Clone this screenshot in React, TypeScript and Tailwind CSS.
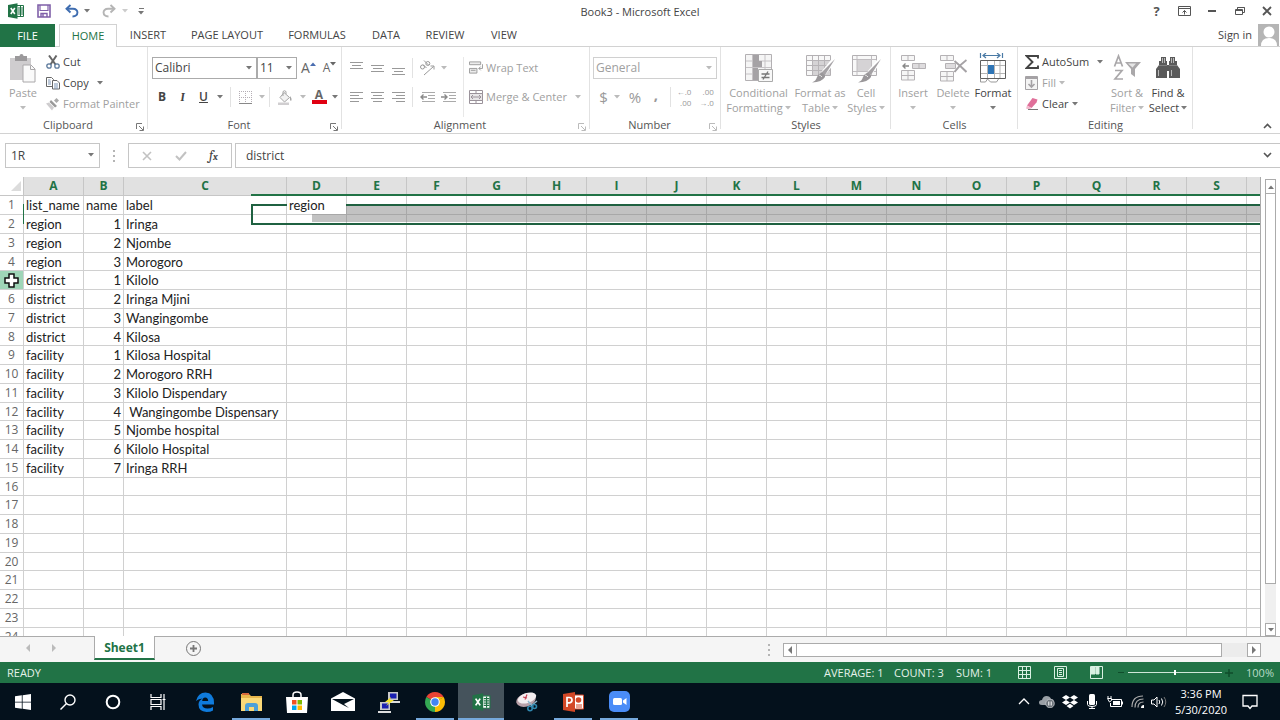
import React from 'react';

type SvgProps = { className?: string };

const Caret: React.FC<SvgProps> = ({ className = 'text-[#777]' }) => (
  <svg viewBox="0 0 6 4" className={`w-[6px] h-[4px] shrink-0 ${className}`}>
    <path d="M0 0h6L3 3.5z" fill="currentColor" />
  </svg>
);

/* ---------- title bar icons ---------- */

const ExcelIcon: React.FC<SvgProps> = ({ className = 'w-4 h-4' }) => (
  <svg viewBox="0 0 16 16" className={className}>
    <path d="M9 2.5h6.5v11H9" fill="#fff" stroke="#217346" />
    <path d="M10 5h5M10 7h5M10 9h5M10 11h5M12.5 3v10" stroke="#217346" />
    <path d="M0 2l9.5-1.8v15.6L0 14z" fill="#217346" />
    <path d="M2.8 5l4 6M6.8 5l-4 6" stroke="#fff" strokeWidth="1.6" />
  </svg>
);

const SaveIcon = () => (
  <svg viewBox="0 0 14 14" className="w-[14px] h-[14px]" fill="none" stroke="#7f5fa8" strokeWidth="1.6">
    <path d="M1 1h12v12H1z" />
    <path d="M3 1v5.5h8V1" strokeWidth="1.2" />
    <path d="M4 13V9.5h6V13M6 10v3" strokeWidth="1.4" />
  </svg>
);

const UndoIcon: React.FC<SvgProps> = ({ className = '' }) => (
  <svg viewBox="0 0 14 14" className={`w-[14px] h-[14px] ${className}`} fill="none" stroke="currentColor" strokeWidth="1.9">
    <path d="M5.5 1L1.5 4.8l4 3.7" />
    <path d="M2 4.8h6c6 0 6 7.5-.5 7.7" />
  </svg>
);

/* ---------- ribbon icons ---------- */

const PasteIcon = () => (
  <svg viewBox="0 0 28 31" className="w-7 h-[31px]">
    <path d="M1 5h21v22H1z" fill="#cfcdcf" />
    <path d="M6 3h4.500a2 2 0 0 1 4 0H18v5H6z" fill="#9b999b" />
    <path d="M14 12h8l4 4v13H14z" fill="#fafafa" stroke="#aaa8aa" />
    <path d="M21.500 12.500v4H26" fill="none" stroke="#aaa8aa" />
  </svg>
);

const CutIcon = () => (
  <svg viewBox="0 0 14 14" className="w-[14px] h-[14px]" fill="none">
    <path d="M3 .5l6.500 9M10.500 .5L4.500 9.500" stroke="#666" strokeWidth="2" />
    <circle cx="3" cy="11" r="2.200" stroke="#5c7a9c" strokeWidth="1.300" />
    <circle cx="11" cy="11" r="2.200" stroke="#5c7a9c" strokeWidth="1.300" />
  </svg>
);

const CopyIcon = () => (
  <svg viewBox="0 0 14 14" className="w-[14px] h-[14px]" fill="#fff" stroke="#666">
    <path d="M.5 1.500h5l2 2v7h-7z" />
    <path d="M6.500 4.500h4.500l2.500 2.500v6h-7z" />
    <path d="M2 4h2.500M2 6h3M2 8h3M8 8h4M8 10h4M8 12h4" stroke="#7b93b3" />
  </svg>
);

const PainterIcon = () => (
  <svg viewBox="0 0 14 14" className="w-[14px] h-[14px]">
    <path d="M10.500 1L13 3.500 10.500 6 8 3.500z" fill="#aaa" />
    <path d="M5 3l6 6-2 1.500-5.500-5.500z" fill="#999" />
    <path d="M0 6.500l3-1 5 5-2 3z" fill="#cfcdcf" />
  </svg>
);

const BordersIcon = () => (
  <svg viewBox="0 0 13 13" className="w-[13px] h-[13px]" fill="none" stroke="#b5aeb5">
    <path d="M.5 0v12M12.500 0v12M6.500 0v12M0 .5h13M0 6.500h13" strokeDasharray="1 1" />
    <path d="M0 12.500h13" stroke="#888" />
  </svg>
);

const BucketIcon = () => (
  <svg viewBox="0 0 15 15" className="w-[15px] h-[15px]" fill="none">
    <path d="M6 2.500l5.500 5-5 4.500L2 7.500z" fill="#f2f2f2" stroke="#a5a5a5" />
    <path d="M5 6V1.500q1.500-1.500 3 0V4" stroke="#a5a5a5" />
    <path d="M12 6q2.500 3 1 5-1.500-.5-1-5z" fill="#a5a5a5" />
    <path d="M0 12.500h11v2.500H0z" fill="#d0ced0" />
  </svg>
);

const ALIGN_LINES: Record<string, string> = {
  top: 'M0 .5h13M2 3.500h9M0 6.500h13',
  middle: 'M0 3.500h13M2 6.500h9M0 9.500h13',
  bottom: 'M0 6.500h13M2 9.500h9M0 12.500h13',
  left: 'M0 1.500h13M0 4.500h9M0 7.500h13M0 10.500h9',
  center: 'M0 1.500h13M2 4.500h9M0 7.500h13M2 10.500h9',
  right: 'M0 1.500h13M4 4.500h9M0 7.500h13M4 10.500h9',
};

const AlignIcon: React.FC<{ kind: string }> = ({ kind }) => (
  <svg viewBox="0 0 13 13" className="w-[13px] h-[13px]" stroke="#999">
    <path d={ALIGN_LINES[kind]} />
  </svg>
);

const IndentIcon: React.FC<{ decrease?: boolean }> = ({ decrease }) => (
  <svg viewBox="0 0 15 12" className="w-[15px] h-3" fill="none" stroke="#aaa">
    <path d="M2 1.500h13M8 4.500h7M8 7.500h7M2 10.500h13" />
    <path d={decrease ? 'M7 6H1M3.500 3.500L1 6l2.500 2.500' : 'M0 6h6M3.500 3.500L6 6 3.500 8.500'} stroke="#8a8a8a" strokeWidth="1.400" />
  </svg>
);

const OrientationIcon = () => (
  <svg viewBox="0 0 16 16" className="w-4 h-4" fill="none" stroke="#999">
    <circle cx="3.500" cy="7" r="2" />
    <path d="M4 4.500L7.500 8M5 .5l4.500 4.500" />
    <circle cx="8.800" cy="3.500" r="2" />
    <path d="M5 15L14.500 6.500M11.500 6h3.500v3.500" />
  </svg>
);

const WrapIcon = () => (
  <svg viewBox="0 0 15 15" className="w-[15px] h-[15px]" fill="none" stroke="#999">
    <path d="M.5 1.500h12v3H.5zM.5 8.500h8v5h-8zM2 10.500h5" fill="#ececec" />
    <path d="M14.500 4v4.500h-4M12.500 6.500l-2 2 2 2" />
  </svg>
);

const MergeIcon = () => (
  <svg viewBox="0 0 14 14" className="w-[14px] h-[14px]" fill="none" stroke="#9a929a">
    <path d="M.5 .5h13v13H.5z" />
    <path d="M.5 3.500h13v7H.5z" fill="#e8e6e8" />
    <path d="M7 .5v3M7 10.500v3M2 7h10M4 5L2 7l2 2M10 5l2 2-2 2" />
  </svg>
);

const ConditionalIcon = () => (
  <svg viewBox="0 0 30 30" className="w-[30px] h-[30px]">
    <path d="M1.500 1.500h26v26h-26z" fill="#f5f5f5" stroke="#b3b0b3" />
    <path d="M2 8h25M2 14.500h25M2 21h25M8.500 2v25M21 2v25" stroke="#c6c3c6" />
    <path d="M9 2h6v6H9zM9 8h9v6H9zM9 15h5v6H9zM9 21h6v6H9z" fill="#a5a2a5" />
    <path d="M14.500 16.500h14v12h-14z" fill="#f8f8f8" stroke="#aaa" />
    <path d="M17.500 21h8M17.500 24.500h8M24 18.500l-5 8" stroke="#777" strokeWidth="1.300" />
  </svg>
);

const TableBrushIcon: React.FC<{ single?: boolean }> = ({ single }) => (
  <svg viewBox="0 0 30 30" className="w-[30px] h-[30px]">
    <path d="M1.500 2.500h24v20h-24z" fill="#f8f8f8" stroke="#b3b0b3" />
    {single ? (
      <>
        <path d="M6 7h14v11H6z" fill="#d5d3d5" />
        <path d="M2 6.500h23M2 18.500h23M6 3v19M20.500 3v19" stroke="#c0bdc0" />
      </>
    ) : (
      <>
        <path d="M8 8h17v14H8z" fill="#d5d3d5" />
        <path d="M2 7.500h23M2 12.500h23M2 17.500h23M7.500 3v19M13.500 3v19M19.500 3v19" stroke="#b7b4b7" />
      </>
    )}
    <path d="M29 7L18.500 20" stroke="#fff" strokeWidth="5" />
    <path d="M30 6L20 22l-3.500-2.500z" fill="#a5a2a5" />
    <path d="M16.500 19.500q4 1.500 3.500 4.500-3 5-13 5.500 4-1.500 5-5.500 1-3 4.500-4.500z" fill="#9a979a" />
    <path d="M14 22q2 .5 3 2" stroke="#e6e6e6" fill="none" />
  </svg>
);

const InsertIcon = () => (
  <svg viewBox="0 0 26 28" className="w-[26px] h-7" fill="#f6f6f6" stroke="#b5b2b5">
    <path d="M1.500 1.500h13v5h-13zM8 1.500v5M1.500 16.500h13v9.500h-13zM8 16.500V26M1.500 21.500h13" />
    <path d="M12.500 9.500h13v5h-13zM19 9.500v5" fill="#dedcde" />
    <path d="M9 12H3M5.500 9.500L3 12l2.500 2.500" fill="none" stroke="#888" strokeWidth="1.400" />
  </svg>
);

const DeleteIcon = () => (
  <svg viewBox="0 0 28 28" className="w-7 h-7" fill="#f6f6f6" stroke="#b5b2b5">
    <path d="M1.500 1.500h13v5h-13zM8 1.500v5M1.500 17.500h13v9.500h-13zM8 17.500V27M1.500 22.500h13" />
    <path d="M6.500 9.500h10v5h-10z" fill="#dedcde" />
    <path d="M15.500 7q6 5 12 11M27.500 6q-7 5-12 12" fill="none" stroke="#a5a2a5" strokeWidth="2" />
  </svg>
);

const FormatIcon = () => (
  <svg viewBox="0 0 28 30" className="w-7 h-[30px]" fill="none">
    <path d="M1.500 0v5M23.500 0v5M4 2.500h17M7 0L4 2.500 7 5M18 0l3 2.500L18 5" stroke="#4a7aa5" strokeWidth="1.200" />
    <path d="M1.500 7.500h25v18h-25z" fill="#fff" stroke="#5f5f5f" />
    <path d="M2 12.500h24M2 20.500h24M8.500 8v17M15.500 8v17M21 8v17" stroke="#b5b5b5" />
    <path d="M9 12h6v9H9z" fill="#2e75b6" />
    <path d="M1.500 26v3h5l2-3 3 3h6l2-3" stroke="#999" />
  </svg>
);

const SigmaIcon = () => (
  <svg viewBox="0 0 14 14" className="w-[14px] h-[14px]" fill="none" stroke="#444" strokeWidth="1.900">
    <path d="M13 3.500V1H1.500l6 6-6 6H13v-2.500" />
  </svg>
);

const FillIcon = () => (
  <svg viewBox="0 0 13 14" className="w-[13px] h-[14px]" fill="none" stroke="#a5a2a5">
    <path d="M.5 .5h12v13H.5z" fill="#f4f4f4" />
    <path d="M1 2h11" strokeWidth="2" />
    <path d="M6.500 4v7M3.500 8l3 3 3-3" strokeWidth="1.600" />
  </svg>
);

const EraserIcon = () => (
  <svg viewBox="0 0 14 13" className="w-[14px] h-[13px]">
    <path d="M7.500 1l5 1.500-1 3L6.500 11 2 8.500z" fill="#e0709a" />
    <path d="M2 8.500L6.500 11l-2 1.500-3.500-1z" fill="#f3b8cd" />
    <path d="M3 12.500h10" stroke="#777" />
  </svg>
);

const SortFilterIcon = () => (
  <svg viewBox="0 0 28 28" className="w-7 h-7" fill="none" stroke="#aaa8aa" strokeWidth="1.700">
    <path d="M1.500 12.500L5.500 2l4 10.500M3 9h5" />
    <path d="M2 16.500h7L2 25h8" />
    <path d="M12 8h16l-6 7v8l-4-3v-5z" fill="#aaa8aa" stroke="none" />
    <path d="M15 9.500h8l-3.500 4z" fill="#e6e6e6" stroke="none" />
  </svg>
);

const BinocularsIcon = () => (
  <svg viewBox="0 0 26 24" className="w-[26px] h-6" fill="#5a5a5a">
    <path d="M6 1h5v4h1v17H1v-9l3-4V5h2z" />
    <path d="M15 1h5v4h2v4l3 4v9H14V5h1z" />
    <path d="M11 9h4v6h-4z" />
    <path d="M7.500 2v5M9.500 2v5M16.500 2v5M18.500 2v5M3.500 14v6M16.500 14v6" stroke="#d0d0d0" strokeWidth=".8" />
    <path d="M4 9.500h8M14 9.500h8" stroke="#8a8a8a" strokeWidth=".8" />
  </svg>
);

/* ---------- ribbon building blocks ---------- */

const GroupLauncher: React.FC<{ label: string; faded?: boolean }> = ({ label, faded }) => (
  <button aria-label={`${label} settings`} className={`mr-1 mt-1 ${faded ? 'text-[#bbb]' : 'text-[#777]'}`}>
    <svg viewBox="0 0 8 8" className="w-2 h-2" fill="none" stroke="currentColor">
      <path d="M.5 6V.5H6M3 3l4 4M7.500 3.500v4h-4" />
    </svg>
  </button>
);

interface GroupProps {
  label: string;
  className: string;
  launcher?: 'dark' | 'faded';
  children: React.ReactNode;
}

const Group: React.FC<GroupProps> = ({ label, className, launcher, children }) => (
  <section aria-label={label} className={`relative flex flex-col shrink-0 pt-1 ${className}`}>
    <div className="flex-1 flex">{children}</div>
    <div className="h-4 flex items-center leading-4 text-[#555]">
      <span className="flex-1 text-center">{label}</span>
      {launcher && <GroupLauncher label={label} faded={launcher === 'faded'} />}
    </div>
    <div className="absolute right-0 top-0 bottom-1 w-px bg-[#e2e2e2]" />
  </section>
);

interface BigButtonProps {
  icon: React.ReactNode;
  lines: string[];
  className: string;
  caretBelow?: boolean;
}

const BigButton: React.FC<BigButtonProps> = ({ icon, lines, className, caretBelow }) => (
  <button className={`flex flex-col items-center shrink-0 whitespace-nowrap ${className}`}>
    <span className="h-[34px] flex items-center">{icon}</span>
    {lines.map((line, i) => (
      <span key={line} className="h-[15px] leading-[15px] flex items-center gap-[2px]">
        {line}
        {!caretBelow && i === lines.length - 1 && <Caret className="opacity-70" />}
      </span>
    ))}
    {caretBelow && <span className="h-[15px] flex items-center"><Caret className="opacity-70" /></span>}
  </button>
);

interface SmallButtonProps {
  icon: React.ReactNode;
  label: string;
  faded?: boolean;
  caret?: string;
}

const SmallButton: React.FC<SmallButtonProps> = ({ icon, label, faded, caret }) => (
  <button className={`h-[21px] flex items-center gap-[3px] whitespace-nowrap ${faded ? 'text-[#a0a0a0]' : 'text-[#444]'}`}>
    <span className="w-[14px] flex">{icon}</span>
    {label}
    {caret && <Caret className={caret} />}
  </button>
);

const IconButton: React.FC<{ label: string; className?: string; children: React.ReactNode }> = ({ label, className = 'w-[21px]', children }) => (
  <button aria-label={label} className={`h-[22px] flex items-center justify-center shrink-0 ${className}`}>
    {children}
  </button>
);

const Divider = () => <span className="w-px h-5 bg-[#e2e2e2] shrink-0" />;

const DropDown: React.FC<{ label: string; value: string; className: string }> = ({ label, value, className }) => (
  <div className={`relative h-[22px] shrink-0 ${className}`}>
    <select aria-label={label} defaultValue={value} className="appearance-none w-full h-full border px-[2px] text-xs outline-none">
      <option>{value}</option>
    </select>
    <Caret className="absolute right-[5px] top-[9px]" />
  </div>
);

/* ---------- title, tabs, ribbon ---------- */

const TitleBar = () => (
  <header className="h-6 shrink-0 grid grid-cols-[1fr_auto_1fr] items-center pb-[2px]">
    <div className="flex items-center pl-2">
      <button aria-label="Excel" className="w-[29px]"><ExcelIcon /></button>
      <button aria-label="Save" className="w-7"><SaveIcon /></button>
      <button aria-label="Undo" className="flex items-center gap-[5px] w-[37px] text-[#3f6db0]"><UndoIcon /><Caret /></button>
      <button aria-label="Redo" className="flex items-center gap-[6px] w-9 text-[#b5b5b5]"><UndoIcon className="-scale-x-100" /><Caret className="text-[#ccc]" /></button>
      <button aria-label="Customize" className="flex flex-col items-center gap-[2px]">
        <span className="w-[5px] h-px bg-[#777]" />
        <Caret />
      </button>
    </div>
    <h1 className="pt-px text-[#444]">Book3 - Microsoft Excel</h1>
    <div className="flex justify-end items-center text-[#555]">
      <button aria-label="Help" className="w-[27px] text-[13px] font-bold">?</button>
      <button aria-label="Ribbon options" className="w-7 flex justify-center">
        <svg viewBox="0 0 13 10" className="w-[13px] h-[10px]" fill="none" stroke="currentColor">
          <path d="M.5 .5h12v9H.5zM1 2.500h11M6.500 8.500V4.500M4.500 6.500l2-2 2 2" />
        </svg>
      </button>
      <button aria-label="Minimize" className="w-7 flex justify-center"><span className="w-2 h-[2px] bg-[#555]" /></button>
      <button aria-label="Restore" className="w-[27px] flex justify-center">
        <svg viewBox="0 0 10 10" className="w-[10px] h-[10px]" fill="none" stroke="currentColor">
          <path d="M.5 3.500h7v5h-7zM.5 4.500h7M2.500 3V1.500h7v5H8M2.500 1.500h7" />
        </svg>
      </button>
      <button aria-label="Close" className="w-[27px] flex justify-center">
        <svg viewBox="0 0 10 10" className="w-[10px] h-[10px]" stroke="currentColor" strokeWidth="1.800">
          <path d="M1 1l8 8M9 1L1 9" />
        </svg>
      </button>
    </div>
  </header>
);

const TABS = [
  { name: 'INSERT', width: 'w-[62px]' },
  { name: 'PAGE LAYOUT', width: 'w-24' },
  { name: 'FORMULAS', width: 'w-[84px]' },
  { name: 'DATA', width: 'w-[54px]' },
  { name: 'REVIEW', width: 'w-16' },
  { name: 'VIEW', width: 'w-[54px]' },
];

const RibbonTabs = () => (
  <nav className="h-[23px] shrink-0 flex text-[11px] text-[#444] whitespace-nowrap">
    <button className="w-[55px] bg-[#217346] text-white">FILE</button>
    <span className="w-1 border-b border-[#d2d2d2]" />
    <button className="w-[58px] border border-b-0 border-[#d2d2d2] text-[#217346]">HOME</button>
    {TABS.map(tab => (
      <button key={tab.name} className={`border-b border-[#d2d2d2] ${tab.width}`}>{tab.name}</button>
    ))}
    <div className="flex-1 flex items-end justify-end gap-[6px] pr-px border-b border-[#d2d2d2]">
      <button className="h-[22px]">Sign in</button>
      <svg viewBox="0 0 21 22" className="w-[21px] h-[22px]">
        <path d="M0 0h21v22H0z" fill="#b5b5b5" />
        <circle cx="11" cy="8" r="5.500" fill="#fff" />
        <path d="M3 22q0-8 8-8t8 8z" fill="#fff" />
      </svg>
    </div>
  </nav>
);

const Ribbon = () => (
  <div className="relative h-[87px] shrink-0 flex border-b border-[#d2d2d2] text-[#a0a0a0]">
    <Group label="Clipboard" className="w-[148px]" launcher="dark">
      <BigButton className="w-[46px]" icon={<PasteIcon />} lines={['Paste']} caretBelow />
      <div className="flex flex-col">
        <SmallButton icon={<CutIcon />} label="Cut" />
        <SmallButton icon={<CopyIcon />} label="Copy" caret="ml-[5px] text-[#777]" />
        <SmallButton icon={<PainterIcon />} label="Format Painter" faded />
      </div>
    </Group>

    <Group label="Font" className="w-[194px]" launcher="dark">
      <div className="flex flex-col gap-[7px] pl-1 pt-[6px] text-[#777]">
        <div className="flex">
          <DropDown label="Font" value="Calibri" className="w-[105px] [&>select]:text-[#444] [&>select]:border-[#ababab]" />
          <DropDown label="Font size" value="11" className="w-10 [&>select]:text-[#444] [&>select]:border-[#ababab]" />
          <IconButton label="Grow font" className="w-[23px] text-[#666] text-sm">
            A<Caret className="-scale-y-100 mb-2 text-[#4a6db0]" />
          </IconButton>
          <IconButton label="Shrink font" className="w-[19px] text-[#666] text-xs">
            A<Caret className="mb-2" />
          </IconButton>
        </div>
        <div className="flex items-center text-xs text-[#444]">
          <IconButton label="Bold" className="w-5"><b>B</b></IconButton>
          <IconButton label="Italic"><b className="font-serif italic">I</b></IconButton>
          <IconButton label="Underline"><b className="underline font-semibold">U</b></IconButton>
          <IconButton label="Underline styles" className="w-3 mr-1 text-[#777]"><Caret /></IconButton>
          <Divider />
          <IconButton label="Borders" className="w-7"><BordersIcon /></IconButton>
          <Caret className="text-[#bbb] mr-1" />
          <Divider />
          <IconButton label="Fill color" className="w-[30px]"><BucketIcon /></IconButton>
          <Caret className="text-[#bbb]" />
          <IconButton label="Font color" className="w-[26px]">
            <span className="w-[15px] h-[14px] leading-[10px] border-b-4 border-[#e00012] font-bold text-[#666]">A</span>
          </IconButton>
          <Caret />
        </div>
      </div>
    </Group>

    <Group label="Alignment" className="w-[248px]" launcher="faded">
      <div className="flex flex-col gap-[7px] pt-[6px] pl-1">
        <div className="flex items-center">
          <IconButton label="Top align"><AlignIcon kind="top" /></IconButton>
          <IconButton label="Middle align"><AlignIcon kind="middle" /></IconButton>
          <IconButton label="Bottom align"><AlignIcon kind="bottom" /></IconButton>
          <span className="w-[3px]" />
          <Divider />
          <IconButton label="Orientation" className="w-7"><OrientationIcon /></IconButton>
          <Caret className="text-[#bbb]" />
        </div>
        <div className="flex items-center">
          <IconButton label="Align left"><AlignIcon kind="left" /></IconButton>
          <IconButton label="Center"><AlignIcon kind="center" /></IconButton>
          <IconButton label="Align right"><AlignIcon kind="right" /></IconButton>
          <span className="w-[3px]" />
          <Divider />
          <span className="w-1" />
          <IconButton label="Decrease indent"><IndentIcon decrease /></IconButton>
          <IconButton label="Increase indent"><IndentIcon /></IconButton>
        </div>
      </div>
      <div className="flex flex-col gap-2 mt-[6px] pl-[5px] ml-1 border-l border-[#e8e8e8]">
        <SmallButton icon={<WrapIcon />} label="Wrap Text" faded />
        <SmallButton icon={<MergeIcon />} label="Merge & Center" faded caret="ml-[5px] text-[#bbb]" />
      </div>
    </Group>

    <Group label="Number" className="w-[131px]" launcher="faded">
      <div className="flex-1 flex flex-col gap-[7px] pt-[6px] pl-[3px] pr-1">
        <DropDown label="Number format" value="General" className="w-full text-[#bbb] [&>select]:text-[#a0a0a0] [&>select]:border-[#d0d0d0]" />
        <div className="flex items-center text-[15px] text-[#999]">
          <IconButton label="Currency">$</IconButton>
          <Caret className="text-[#bbb]" />
          <IconButton label="Percent" className="w-[30px]">%</IconButton>
          <IconButton label="Comma" className="w-3"><b className="mb-[6px]">,</b></IconButton>
          <span className="w-2" />
          <Divider />
          <IconButton label="Increase decimal" className="w-[26px]">
            <span className="flex flex-col items-end text-[8px] leading-[11px]"><span>←.0</span><span>.00</span></span>
          </IconButton>
          <IconButton label="Decrease decimal" className="w-[19px]">
            <span className="flex flex-col items-end text-[8px] leading-[11px]"><span>.00</span><span>→.0</span></span>
          </IconButton>
        </div>
      </div>
    </Group>

    <Group label="Styles" className="w-[170px]">
      <BigButton className="w-[75px]" icon={<ConditionalIcon />} lines={['Conditional', 'Formatting']} />
      <BigButton className="w-12" icon={<TableBrushIcon />} lines={['Format as', 'Table']} />
      <BigButton className="w-11" icon={<TableBrushIcon single />} lines={['Cell', 'Styles']} />
    </Group>

    <Group label="Cells" className="w-[127px]">
      <BigButton className="w-[44px]" icon={<InsertIcon />} lines={['Insert']} caretBelow />
      <BigButton className="w-9" icon={<DeleteIcon />} lines={['Delete']} caretBelow />
      <BigButton className="w-11 text-[#444]" icon={<FormatIcon />} lines={['Format']} caretBelow />
    </Group>

    <Group label="Editing" className="w-[175px]">
      <div className="flex flex-col w-[88px] pl-[7px]">
        <SmallButton icon={<SigmaIcon />} label="AutoSum" caret="ml-[5px] text-[#777]" />
        <SmallButton icon={<FillIcon />} label="Fill" faded caret="text-[#bbb]" />
        <SmallButton icon={<EraserIcon />} label="Clear" caret="text-[#777]" />
      </div>
      <BigButton className="w-[42px]" icon={<SortFilterIcon />} lines={['Sort &', 'Filter']} />
      <BigButton className="w-10 text-[#444]" icon={<BinocularsIcon />} lines={['Find &', 'Select']} />
    </Group>

    <button aria-label="Collapse ribbon" className="absolute right-2 bottom-1">
      <svg viewBox="0 0 9 6" className="w-[9px] h-[6px]" fill="none" stroke="#555" strokeWidth="1.600">
        <path d="M1 5l3.500-3.500L8 5" />
      </svg>
    </button>
  </div>
);

/* ---------- formula bar ---------- */

const Grip = () => (
  <span className="w-7 flex flex-col items-center justify-center gap-[3px]">
    <i className="w-[2px] h-[2px] bg-[#b5b5b5]" />
    <i className="w-[2px] h-[2px] bg-[#b5b5b5]" />
    <i className="w-[2px] h-[2px] bg-[#b5b5b5]" />
  </span>
);

const FormulaBar = () => (
  <div className="h-[43px] shrink-0 flex pt-[9px] pb-[9px] text-xs text-[#444]">
    <div className="relative ml-[5px] w-[95px]">
      <input aria-label="Name box" defaultValue="1R" className="w-full h-full border border-[#c6c6c6] pl-[5px] outline-none" />
      <Caret className="absolute right-[6px] top-[10px] text-[#777]" />
    </div>
    <Grip />
    <div className="w-[104px] flex items-center border border-[#c6c6c6]">
      <button aria-label="Cancel" className="w-[35px] flex justify-center">
        <svg viewBox="0 0 10 10" className="w-[10px] h-[10px]" stroke="#c2c2c2" strokeWidth="1.600"><path d="M1 1l8 8M9 1L1 9" /></svg>
      </button>
      <button aria-label="Enter" className="w-[34px] flex justify-center">
        <svg viewBox="0 0 12 10" className="w-3 h-[10px]" fill="none" stroke="#c2c2c2" strokeWidth="2"><path d="M1 5l3.500 3.500L11 1" /></svg>
      </button>
      <button aria-label="Insert function" className="w-[31px] font-serif italic text-sm">
        f<span className="text-[10px] font-bold">x</span>
      </button>
    </div>
    <div className="relative flex-1 ml-[3px]">
      <input aria-label="Formula" defaultValue="district" className="w-full h-full border border-r-0 border-[#c6c6c6] pl-[10px] outline-none" />
      <svg viewBox="0 0 9 6" className="absolute right-2 top-[9px] w-[9px] h-[6px]" fill="none" stroke="#555" strokeWidth="1.600">
        <path d="M1 1l3.500 3.500L8 1" />
      </svg>
    </div>
  </div>
);

/* ---------- sheet ---------- */

const COLUMNS = 'ABCDEFGHIJKLMNOPQRS'.split('');

const ROWS: [string, string, string][] = [
  ['list_name', 'name', 'label'],
  ['region', '1', 'Iringa'],
  ['region', '2', 'Njombe'],
  ['region', '3', 'Morogoro'],
  ['district', '1', 'Kilolo'],
  ['district', '2', 'Iringa Mjini'],
  ['district', '3', 'Wangingombe'],
  ['district', '4', 'Kilosa'],
  ['facility', '1', 'Kilosa Hospital'],
  ['facility', '2', 'Morogoro RRH'],
  ['facility', '3', 'Kilolo Dispendary'],
  ['facility', '4', ' Wangingombe Dispensary'],
  ['facility', '5', 'Njombe hospital'],
  ['facility', '6', 'Kilolo Hospital'],
  ['facility', '7', 'Iringa RRH'],
];

const ROW_COUNT = 24;

const columnWidth = (index: number) => {
  if (index === 1) return 'w-10';
  if (index === 2) return 'w-[163px]';
  return 'w-[60px]';
};

const Cursor = () => (
  <svg viewBox="0 0 15 15" className="w-[15px] h-[15px] mx-auto">
    <path d="M5 1h5v4h4v5h-4v4H5v-4H1V5h4z" fill="#fff" stroke="#111" strokeWidth="1.500" />
  </svg>
);

const SelectionMarks = () => (
  <div className="pointer-events-none">
    <div className="absolute left-[251px] right-0 top-[17px] h-[2px] bg-[#217346]" />
    <div className="absolute left-[23px] top-[27px] w-px h-5 bg-[#217346]" />
    <div className="absolute left-[251px] right-0 top-[27px] h-[21px] border-2 border-r-0 border-[#1f6141]" />
    <div className="absolute left-[312px] right-0 top-[37px] h-2 bg-[#777]/45" />
    <div className="absolute left-[346px] right-0 top-[29px] h-2 bg-[#777]/45" />
    <div className="absolute left-[287px] top-[19px] w-[59px] h-[18px] pl-[2px] bg-white leading-[18px] text-[13px] text-[#222] font-['Lato',sans-serif]">region</div>
  </div>
);

const Sheet = () => (
  <div className="relative flex-1 overflow-hidden border-r border-[#ababab]">
    <table className="table-fixed w-full border-separate border-spacing-0">
      <thead>
        <tr className="h-[19px] text-xs leading-4 text-[#217346]">
          <th className="w-6 p-0 border-b border-r border-[#c6c6c6]">
            <svg viewBox="0 0 10 10" className="w-[10px] h-[10px] ml-auto mr-[2px]"><path d="M10 0v10H0z" fill="#dcdcdc" /></svg>
          </th>
          {COLUMNS.map((name, i) => (
            <th key={name} scope="col" className={`p-0 bg-[#e1e1e1] border-b border-r border-[#c6c6c6] font-bold ${columnWidth(i)}`}>{name}</th>
          ))}
          <th className="p-0 bg-[#e1e1e1] border-b border-[#c6c6c6]" />
        </tr>
      </thead>
      <tbody>
        {Array.from({ length: ROW_COUNT }, (_, r) => {
          const cells = ROWS[r] ?? [];
          return (
            <tr key={r} className="h-[19px] nth-[4n]:h-[18px] text-[13px] leading-4 text-[#222] font-['Lato',sans-serif] whitespace-pre">
              <th scope="row" className={`p-0 border-b border-r border-[#d0d0d0] font-normal text-xs leading-4 text-[#666] font-['Open_Sans',sans-serif] ${r === 4 ? 'bg-[#9fd5b7]' : ''}`}>
                {r === 4 ? <Cursor /> : r + 1}
              </th>
              {COLUMNS.map((name, c) => (
                <td key={name} className={`py-0 px-[2px] border-b border-r border-[#d0d0d0] ${c === 1 && r > 0 ? 'text-right' : ''}`}>{cells[c]}</td>
              ))}
              <td className="p-0 border-b border-[#d0d0d0]" />
            </tr>
          );
        })}
      </tbody>
    </table>
    <SelectionMarks />
  </div>
);

const VerticalScroll = () => (
  <div className="w-[11px] mx-1 mt-[2px] shrink-0 flex flex-col bg-[#f0f0f0] text-[#777]">
    <button aria-label="Scroll up" className="h-[15px] flex items-center justify-center bg-white border border-[#ababab]"><Caret className="-scale-y-100" /></button>
    <div className="flex-1 flex flex-col">
      <div className="h-[91%] bg-white border border-t-0 border-[#ababab]" />
    </div>
    <button aria-label="Scroll down" className="h-[13px] flex items-center justify-center bg-white border border-[#ababab]"><Caret /></button>
  </div>
);

const SideArrow: React.FC<SvgProps & { left?: boolean }> = ({ left, className = 'text-[#777]' }) => (
  <svg viewBox="0 0 4 8" className={`w-1 h-2 ${left ? '-scale-x-100' : ''} ${className}`}>
    <path d="M0 0l4 4-4 4z" fill="currentColor" />
  </svg>
);

const SheetTabs = () => (
  <div className="h-[26px] shrink-0 flex bg-[#f5f5f5] border-t border-[#ababab]">
    <div className="w-[94px] pb-1 flex items-center gap-[22px] pl-[26px]">
      <button aria-label="Previous sheet"><SideArrow left className="text-[#bbb]" /></button>
      <button aria-label="Next sheet"><SideArrow className="text-[#bbb]" /></button>
    </div>
    <button className="w-[61px] h-6 -mt-px pt-px bg-white border-x border-x-[#ababab] border-b-2 border-b-[#217346] text-xs font-bold text-[#217346]">Sheet1</button>
    <button aria-label="New sheet" className="w-[76px] pb-[2px] flex items-center justify-center">
      <svg viewBox="0 0 15 15" className="w-[15px] h-[15px]" fill="none" stroke="#777">
        <circle cx="7.500" cy="7.500" r="7" />
        <path d="M7.500 4v7M4 7.500h7" strokeWidth="1.800" />
      </svg>
    </button>
    <div className="flex-1 flex justify-end pt-[6px] pb-[5px] pr-[19px]">
      <Grip />
      <div className="w-[478px] flex bg-[#ececec]">
        <button aria-label="Scroll left" className="w-[14px] flex items-center justify-center bg-white border border-[#ababab]"><SideArrow left /></button>
        <div className="w-[425px] bg-white border border-l-0 border-[#ababab]" />
        <button aria-label="Scroll right" className="w-[14px] ml-auto flex items-center justify-center bg-white border border-[#ababab]"><SideArrow /></button>
      </div>
    </div>
  </div>
);

const StatusBar = () => (
  <footer className="h-[21px] shrink-0 flex items-center pl-[7px] pr-[6px] bg-[#217346] text-[11px] text-[#e6f2ea] whitespace-nowrap">
    <span>READY</span>
    <div className="ml-auto flex items-center">
      <span className="w-[70px]">AVERAGE: 1</span>
      <span className="w-[62px]">COUNT: 3</span>
      <span className="w-[50px]">SUM: 1</span>
      <button aria-label="Normal view" className="w-9 flex justify-center">
        <svg viewBox="0 0 13 13" className="w-[13px] h-[13px]" fill="none" stroke="#d9f0e2"><path d="M.5 .5h12v12H.5zM4.500 0v13M8.500 0v13M0 4.500h13M0 8.500h13" /></svg>
      </button>
      <button aria-label="Page layout" className="w-9 flex justify-center">
        <svg viewBox="0 0 13 13" className="w-[13px] h-[13px]" fill="none" stroke="#d9f0e2"><path d="M.5 .5h12v12H.5zM3.500 2.500h6v8h-6zM5 4.500h3M5 6.500h3M5 8.500h3" /></svg>
      </button>
      <button aria-label="Page break preview" className="w-9 flex justify-center">
        <svg viewBox="0 0 13 13" className="w-[13px] h-[13px]" fill="none" stroke="#d9f0e2"><path d="M.5 .5h12v12H.5z" /><path d="M1 1h4v7H1zM6 1h3v7H6z" fill="#d9f0e2" /></svg>
      </button>
      <button aria-label="Zoom out" className="w-[14px] flex justify-center"><span className="w-[6px] h-px bg-[#0f4c2b]" /></button>
      <input
        type="range"
        aria-label="Zoom"
        defaultValue={50}
        className="appearance-none w-[94px] h-px bg-[#cfe6d8] [&::-webkit-slider-thumb]:appearance-none [&::-webkit-slider-thumb]:w-[2px] [&::-webkit-slider-thumb]:h-[5px] [&::-webkit-slider-thumb]:bg-white"
      />
      <button aria-label="Zoom in" className="w-[14px] flex justify-center">
        <svg viewBox="0 0 8 8" className="w-2 h-2" stroke="#0f4c2b" strokeWidth="1.500"><path d="M4 0v8M0 4h8" /></svg>
      </button>
      <span className="w-[38px] text-right text-[#b9dcc7]">100%</span>
    </div>
  </footer>
);

/* ---------- taskbar ---------- */

const TASK_ICONS: { name: string; running?: boolean; active?: boolean; icon: React.ReactNode }[] = [
  {
    name: 'Edge',
    icon: (
      <svg viewBox="0 0 20 20" className="w-5 h-5">
        <path d="M1 9Q3 .5 10.500 .5 19 1 19 11v1.500H7q.5 4 5.500 4 3 0 5.500-1.500v3.500Q15.500 20 11.500 20 3.500 19.500 3.500 12.500 3.500 8.500 7.500 6.500 3.500 6.500 1 9zM7.200 9h6q-.2-3.500-3-3.500T7.200 9z" fill="#0f7bdc" />
      </svg>
    ),
  },
  {
    name: 'File Explorer',
    running: true,
    icon: (
      <svg viewBox="0 0 21 18" className="w-[21px] h-[18px]">
        <path d="M0 1h8l2 2h11v15H0z" fill="#e8b64c" />
        <path d="M1 0h7v2H1z" fill="#d5683c" />
        <path d="M0 5h21v13H0z" fill="#fbd978" />
        <path d="M4 18v-5q0-3 3-3h7q3 0 3 3v5h-4v-4H8v4z" fill="#4da0d8" />
      </svg>
    ),
  },
  {
    name: 'Store',
    icon: (
      <svg viewBox="0 0 22 22" className="w-[22px] h-[22px]">
        <path d="M7 6V4q0-3 4-3t4 3v2" fill="none" stroke="#fff" strokeWidth="1.500" />
        <path d="M0 6h22l-1 16H1z" fill="#fff" />
        <path d="M6 9h4.500v4.500H6z" fill="#f25022" />
        <path d="M11.500 9H16v4.500h-4.500z" fill="#7fba00" />
        <path d="M6 14.500h4.500V19H6z" fill="#00a4ef" />
        <path d="M11.500 14.500H16V19h-4.500z" fill="#ffb900" />
      </svg>
    ),
  },
  {
    name: 'Mail',
    icon: (
      <svg viewBox="0 0 24 19" className="w-6 h-[19px]">
        <path d="M0 6.500L12 0l12 6.500V19H0z" fill="#fff" />
        <path d="M1 7h22l-10 5 5 4-6-3z" fill="#03121c" />
      </svg>
    ),
  },
  {
    name: 'PuTTY',
    icon: (
      <svg viewBox="0 0 22 22" className="w-[22px] h-[22px]">
        <path d="M10 1h10v8H10zM2 11h10v8H2z" fill="#c9c9c9" />
        <path d="M12 2.500h6.500v5H12zM4 12.500h6.500v5H4z" fill="#1a1fb0" />
        <path d="M11 10h11v2H11zM0 20h13v2H0z" fill="#ddd" />
        <path d="M13 6l-6 5h4l-3 4 8-6h-4z" fill="#f4e12a" />
      </svg>
    ),
  },
  {
    name: 'Chrome',
    running: true,
    icon: (
      <svg viewBox="0 0 20 20" className="w-5 h-5">
        <path d="M10 10L1.340 5A10 10 0 0 1 18.660 5z" fill="#ea4335" />
        <path d="M10 10L18.660 5A10 10 0 0 1 10 20z" fill="#fbbc05" />
        <path d="M10 10v10A10 10 0 0 1 1.340 5z" fill="#34a853" />
        <path d="M10 5h8.660L10 10z" fill="#fbbc05" />
        <circle cx="10" cy="10" r="4.800" fill="#fff" />
        <circle cx="10" cy="10" r="3.700" fill="#4285f4" />
      </svg>
    ),
  },
  { name: 'Excel', running: true, active: true, icon: <ExcelIcon className="w-[19px] h-[18px]" /> },
  {
    name: 'Snipping Tool',
    icon: (
      <svg viewBox="0 0 22 20" className="w-[22px] h-5">
        <ellipse cx="10" cy="8" rx="10" ry="6.500" fill="#b8a0a8" transform="rotate(-18 10 8)" />
        <ellipse cx="11" cy="6" rx="9.500" ry="5" fill="#f3eef0" transform="rotate(-18 11 6)" />
        <path d="M7 5l4 1M11 2.500l-2 5" stroke="#c23b4e" strokeWidth="1.200" />
        <path d="M12 9l5 6M21 9l-6 5" stroke="#8fb6cc" strokeWidth="1.400" />
        <circle cx="14" cy="16.500" r="2.200" fill="none" stroke="#2f86ad" strokeWidth="1.600" />
        <circle cx="18.500" cy="14.500" r="2" fill="none" stroke="#2f86ad" strokeWidth="1.600" />
      </svg>
    ),
  },
  {
    name: 'PowerPoint',
    running: true,
    icon: (
      <svg viewBox="0 0 21 20" className="w-[21px] h-5">
        <path d="M11 3h9.500v14H11z" fill="#fff" stroke="#d24726" />
        <circle cx="15.500" cy="8" r="2.800" fill="#d24726" />
        <path d="M13 13h6M13 15h6" stroke="#d24726" />
        <path d="M0 2l12-2v20L0 18z" fill="#d24726" />
        <path d="M4 15V5.500h2.500q2.500 0 2.500 2.500T6.500 10.800H4" fill="none" stroke="#fff" strokeWidth="1.700" />
      </svg>
    ),
  },
  {
    name: 'Zoom',
    running: true,
    icon: (
      <svg viewBox="0 0 21 21" className="w-[21px] h-[21px]">
        <rect width="21" height="21" rx="5" fill="#4a8cf7" />
        <rect x="4" y="7" width="9" height="7" rx="1.500" fill="#fff" />
        <path d="M14 9.500L17.500 7v7L14 11.500z" fill="#fff" />
      </svg>
    ),
  },
];

const Taskbar = () => (
  <nav aria-label="Taskbar" className="h-[37px] shrink-0 flex bg-[#04111c] text-white">
    <button aria-label="Start" className="w-[45px] flex items-center justify-center">
      <svg viewBox="0 0 16 16" className="w-4 h-4" fill="#fff"><path d="M0 2.300L6.800 1.300v6.400H0zM7.600 1.200L16 0v7.700H7.600zM0 8.400h6.800v6.400L0 13.800zM7.600 8.400H16V16l-8.400-1.200z" /></svg>
    </button>
    <button aria-label="Search" className="w-[45px] flex items-center justify-center">
      <svg viewBox="0 0 16 16" className="w-4 h-4" fill="none" stroke="#fff" strokeWidth="1.400"><circle cx="10" cy="6" r="5" /><path d="M6.500 9.500L.5 15.500" /></svg>
    </button>
    <button aria-label="Cortana" className="w-[45px] flex items-center justify-center">
      <svg viewBox="0 0 16 16" className="w-4 h-4" fill="none" stroke="#fff" strokeWidth="2"><circle cx="8" cy="8" r="6.300" /></svg>
    </button>
    <button aria-label="Task view" className="w-[45px] mr-[2px] flex items-center justify-center">
      <svg viewBox="0 0 16 16" className="w-4 h-4" fill="none" stroke="#fff" strokeWidth="1.200"><path d="M1 0v3.500h10V0M1 16v-3.500h10V16M1 5.500h10v5H1zM14 0v16M12.500 5.500h3" /></svg>
    </button>
    {TASK_ICONS.map(task => (
      <button
        key={task.name}
        aria-label={task.name}
        className={`relative w-[46px] flex items-center justify-center ${task.active ? 'bg-[#45535c]' : ''}`}
      >
        {task.icon}
        {task.running && <span className={`absolute bottom-0 h-[2px] bg-[#76a9dc] ${task.active ? 'inset-x-0' : 'inset-x-1'}`} />}
      </button>
    ))}
    <div className="ml-auto flex items-center pr-[18px]">
      <button aria-label="Hidden icons" className="w-[22px] flex justify-center">
        <svg viewBox="0 0 12 7" className="w-3 h-[7px]" fill="none" stroke="#fff" strokeWidth="1.300"><path d="M1 6l5-5 5 5" /></svg>
      </button>
      <button aria-label="OneDrive" className="w-[23px] flex justify-center">
        <svg viewBox="0 0 16 13" className="w-4 h-[13px]">
          <path d="M3 10Q0 10 0 7.500T3 5Q4 1 7.500 1T12 4q3 0 3 3l-2 3z" fill="#9aa0a6" />
          <circle cx="11" cy="8.500" r="4.300" fill="#6e757c" stroke="#c5c8cb" strokeWidth=".8" />
          <path d="M9.800 6.500v4M12.200 6.500v4" stroke="#fff" />
        </svg>
      </button>
      <button aria-label="Dropbox" className="w-[23px] flex justify-center">
        <svg viewBox="0 0 16 14" className="w-4 h-[14px]" fill="#fff"><path d="M4 0l4 2.500L4 5 0 2.500zM12 0l4 2.500L12 5 8 2.500zM4 5l4 2.500L4 10 0 7.500zM12 5l4 2.500L12 10 8 7.500zM8 8.800l3.500 2.300L8 13.500l-3.500-2.400z" /></svg>
      </button>
      <button aria-label="Microphone" className="w-[22px] flex justify-center">
        <svg viewBox="0 0 12 15" className="w-3 h-[15px]"><rect x="3" width="6" height="11" rx="1.500" fill="#fff" /><path d="M1.500 7v3.500q0 2 4.500 2t4.500-2V7M6 12v3M3 14.500h6" stroke="#fff" fill="none" /></svg>
      </button>
      <button aria-label="Battery" className="w-[23px] flex justify-center">
        <svg viewBox="0 0 16 12" className="w-4 h-3" fill="none" stroke="#fff"><path d="M5 3.500h9.500v7H3.500V7M15.500 5.500v3M1 0v2M4 0v2M.5 2.500h4v2l-2 1.500z" /><path d="M6 5h7v4H6z" fill="#fff" stroke="none" /></svg>
      </button>
      <button aria-label="Network" className="w-[22px] flex justify-center">
        <svg viewBox="0 0 13 13" className="w-[13px] h-[13px]" fill="none" stroke="#aaa" strokeWidth="1.200"><path d="M1 12Q1 1 12 1M4 12.500Q4 4 12.500 4M7 12.500Q7 7 12.500 7" /><path d="M10 13q0-3 3-3v3z" fill="#fff" stroke="none" /></svg>
      </button>
      <button aria-label="Volume" className="w-[22px] flex justify-center">
        <svg viewBox="0 0 16 12" className="w-4 h-3" fill="none" stroke="#fff"><path d="M.5 4h2.500l3-3v10L3 8H.5zM8 4q1.500 2 0 4M10.500 2.500q2.500 3.500 0 7" /><path d="M13 1q3.500 5 0 10" stroke="#777" /></svg>
      </button>
      <button className="w-[62px] text-center leading-4 text-[11px]">
        <span className="block">3:36 PM</span>
        <span className="block">5/30/2020</span>
      </button>
      <button aria-label="Notifications" className="w-[26px] pl-[10px] mr-1 flex justify-center">
        <svg viewBox="0 0 16 16" className="w-4 h-4 shrink-0" fill="none" stroke="#fff" strokeWidth="1.300"><path d="M1 1.500h14v10.500h-5L8 14.500 6 12H1z" /></svg>
      </button>
    </div>
  </nav>
);

const App: React.FC = () => (
  <div className="h-screen flex flex-col overflow-hidden bg-white text-[11px] leading-4 font-['Open_Sans','Noto_Sans',sans-serif]">
    <TitleBar />
    <RibbonTabs />
    <Ribbon />
    <FormulaBar />
    <main className="flex-1 min-h-0 flex">
      <Sheet />
      <VerticalScroll />
    </main>
    <SheetTabs />
    <StatusBar />
    <Taskbar />
  </div>
);

export default App;
